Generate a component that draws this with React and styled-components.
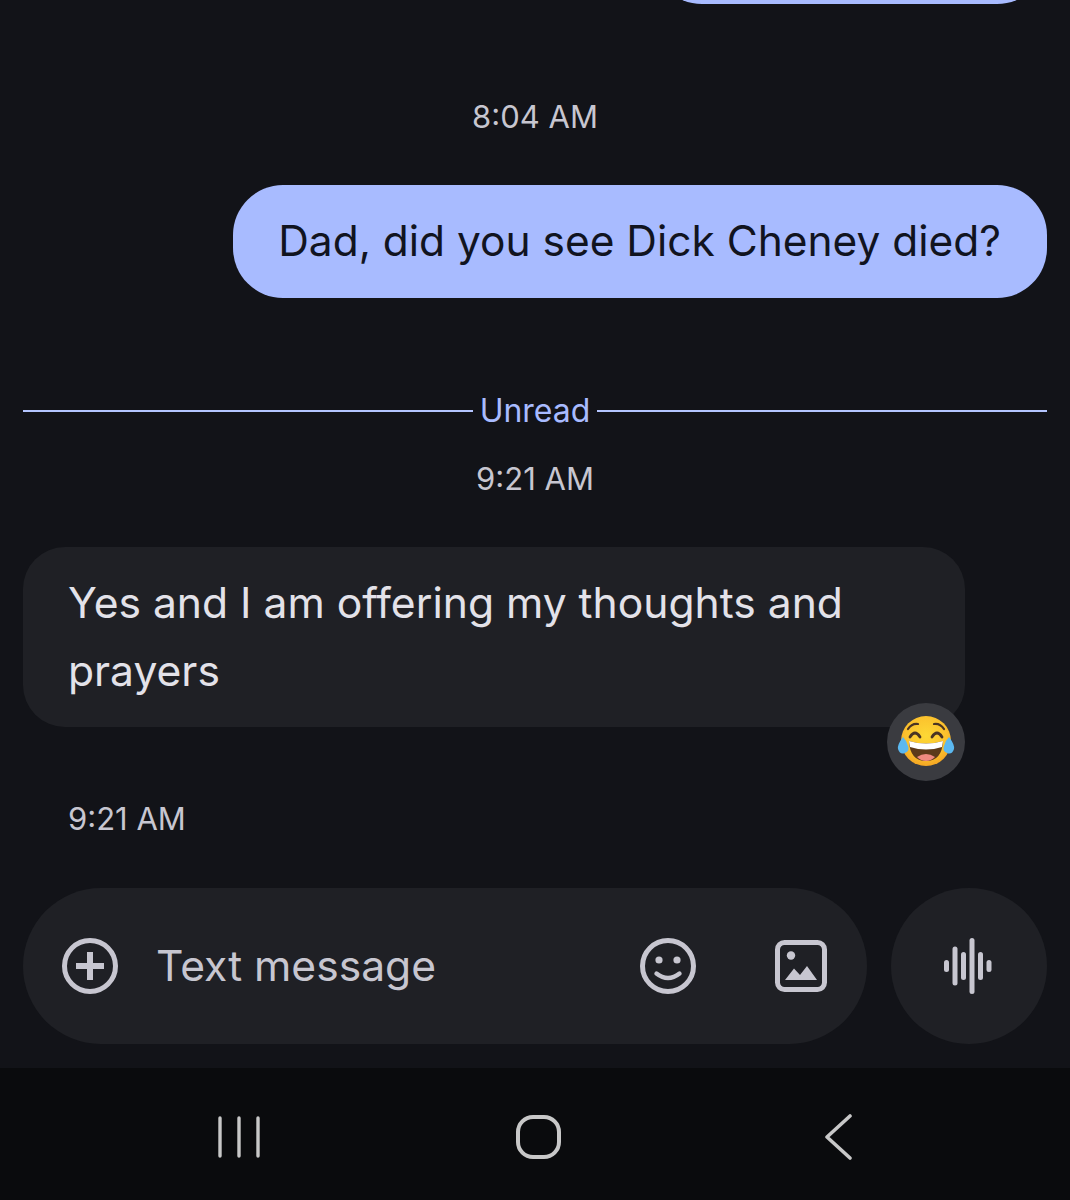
import React from "react";
import styled, { createGlobalStyle } from "styled-components";

const Global = createGlobalStyle`
  html, body { margin: 0; padding: 0; background: #121318; }
  * { box-sizing: border-box; }
`;

const Screen = styled.div`
  width: 1070px;
  height: 1200px;
  background: #121318;
  display: flex;
  flex-direction: column;
  font-family: Inter, Roboto, "Liberation Sans", sans-serif;
  overflow: hidden;
`;

const Thread = styled.div`
  flex: 1;
  display: flex;
  flex-direction: column;
  padding: 0 23px;
`;

const PrevBubbleEdge = styled.div`
  align-self: flex-end;
  width: 395px;
  height: 104px;
  margin-top: -100px;
  background: #a8bbff;
  border-radius: 50px;
`;

const Time = styled.div`
  font-size: 31px;
  line-height: 40px;
  color: #c7c6d0;
  text-align: ${(p) => (p.$left ? "left" : "center")};
  margin-top: ${(p) => p.$top}px;
  padding-left: ${(p) => (p.$left ? "45px" : "0")};
`;

const SentRow = styled.div`
  display: flex;
  justify-content: flex-end;
  margin-top: 48px;
`;

const SentBubble = styled.div`
  background: #a8bbff;
  color: #11141f;
  font-size: 42.45px;
  line-height: 111px;
  height: 113px;
  padding: 0 46px 0 45px;
  border-radius: 50px;
  white-space: nowrap;
`;

const Divider = styled.div`
  display: flex;
  align-items: center;
  gap: 7px;
  margin-top: 93px;
  height: 40px;
  color: #a8bbff;
  font-size: 32px;
  line-height: 40px;
`;

const DividerLine = styled.span`
  flex: 1;
  height: 2px;
  background: #b4c5ff;
`;

const ReceivedBubble = styled.div`
  position: relative;
  width: 942px;
  margin-top: 48px;
  padding: 22px 45px;
  background: #1f2025;
  color: #e3e2e9;
  font-size: 42.6px;
  line-height: 68px;
  border-radius: 42px;
`;

const Reaction = styled.div`
  position: absolute;
  right: 0;
  top: 156px;
  width: 78px;
  height: 78px;
  border-radius: 50%;
  background: #3a3b40;
  display: flex;
  align-items: center;
  justify-content: center;
`;

const ComposerRow = styled.div`
  display: flex;
  gap: 24px;
  margin-top: 49px;
`;

const Composer = styled.div`
  width: 844px;
  height: 156px;
  background: #1f2025;
  border-radius: 78px;
  display: flex;
  align-items: center;
  padding-left: 39px;
`;

const Placeholder = styled.div`
  flex: 1;
  margin-left: 38px;
  font-size: 42.6px;
  line-height: 56px;
  color: #c7c6d0;
`;

const IconSlot = styled.div`
  width: ${(p) => p.$w}px;
  height: 56px;
  margin-right: ${(p) => p.$mr || 0}px;
  display: flex;
  align-items: center;
  justify-content: center;
  flex: none;
`;

const VoiceButton = styled.div`
  width: 156px;
  height: 156px;
  border-radius: 50%;
  background: #1f2025;
  display: flex;
  align-items: center;
  justify-content: center;
`;

const NavBar = styled.div`
  height: 132px;
  background: #0a0b0d;
  display: flex;
  align-items: center;
  padding-left: 216px;
  padding-top: 6px;
`;

const NavIcon = styled.svg`
  display: block;
  flex: none;
  margin-right: ${(p) => p.$mr || 0}px;
`;

const LaughEmoji = () => (
  <svg width="60" height="56" viewBox="0 0 60 56" aria-hidden="true">
    <defs>
      <radialGradient id="face" cx="50%" cy="40%" r="60%">
        <stop offset="0" stopColor="#fdd835" />
        <stop offset="0.7" stopColor="#fbc02d" />
        <stop offset="1" stopColor="#f5a623" />
      </radialGradient>
    </defs>
    <circle cx="30" cy="27" r="25" fill="url(#face)" />
    <path d="M12 15 Q16 9 22 10" fill="none" stroke="#4a3424" strokeWidth="2.2" strokeLinecap="round" />
    <path d="M48 15 Q44 9 38 10" fill="none" stroke="#4a3424" strokeWidth="2.2" strokeLinecap="round" />
    <path d="M14 23 Q19 15 24 23" fill="none" stroke="#4a3424" strokeWidth="2.8" strokeLinecap="round" />
    <path d="M36 23 Q41 15 46 23" fill="none" stroke="#4a3424" strokeWidth="2.8" strokeLinecap="round" />
    <path d="M13 27 Q30 32 47 27 Q46 47 30 47 Q14 47 13 27 Z" fill="#5d3a1a" />
    <path d="M13 27 Q30 32 47 27 L46 33 Q30 38 14 33 Z" fill="#ffffff" />
    <path d="M21 43 Q30 37 39 43 Q35 47 30 47 Q25 47 21 43 Z" fill="#ef8a80" />
    <path d="M7 23 Q1 31 2 35 Q4 41 9 39 Q14 37 12 32 Q11 27 7 23 Z" fill="#5bb8f0" />
    <path d="M53 23 Q59 31 58 35 Q56 41 51 39 Q46 37 48 32 Q49 27 53 23 Z" fill="#5bb8f0" />
  </svg>
);

const PlusIcon = () => (
  <svg width="56" height="56" viewBox="0 0 56 56" fill="none" stroke="#c7c6d0" aria-hidden="true">
    <circle cx="28" cy="28" r="25.5" strokeWidth="5" />
    <path d="M14 28H42M28 14V42" strokeWidth="6" />
  </svg>
);

const SmileIcon = () => (
  <svg width="56" height="56" viewBox="0 0 56 56" fill="none" stroke="#c7c6d0" aria-hidden="true">
    <circle cx="28" cy="28" r="25.5" strokeWidth="5" />
    <circle cx="19" cy="22" r="3.6" fill="#c7c6d0" stroke="none" />
    <circle cx="37" cy="22" r="3.6" fill="#c7c6d0" stroke="none" />
    <path d="M16.5 35.5Q28 44.5 39.5 35.5" strokeWidth="4.4" strokeLinecap="round" />
  </svg>
);

const ImageIcon = () => (
  <svg width="52" height="52" viewBox="0 0 52 52" aria-hidden="true">
    <rect x="2.5" y="2.5" width="47" height="47" rx="7" fill="none" stroke="#c7c6d0" strokeWidth="5" />
    <circle cx="16" cy="15.5" r="4.2" fill="#c7c6d0" />
    <path d="M10 40L19 28.5L25 35L32 26L42 40Z" fill="#c7c6d0" />
  </svg>
);

const WaveIcon = () => (
  <svg width="50" height="56" viewBox="0 0 50 56" fill="none" stroke="#c7c6d0" strokeLinecap="round" strokeWidth="5" aria-hidden="true">
    <path d="M2.5 24.5V31.5" />
    <path d="M11 11V45" />
    <path d="M19.5 16.5V39.5" />
    <path d="M28 2.5V53.5" />
    <path d="M36.5 16.5V39.5" />
    <path d="M45 24.5V31.5" />
  </svg>
);

export default function App() {
  return (
    <Screen>
      <Global />
      <Thread>
        <PrevBubbleEdge />
        <Time $top={93}>8:04 AM</Time>
        <SentRow>
          <SentBubble>Dad, did you see Dick Cheney died?</SentBubble>
        </SentRow>
        <Divider>
          <DividerLine />
          Unread
          <DividerLine />
        </Divider>
        <Time $top={28}>9:21 AM</Time>
        <ReceivedBubble>
          Yes and I am offering my thoughts and prayers
          <Reaction>
            <LaughEmoji />
          </Reaction>
        </ReceivedBubble>
        <Time $left $top={72}>9:21 AM</Time>
        <ComposerRow>
          <Composer>
            <PlusIcon />
            <Placeholder>Text message</Placeholder>
            <IconSlot $w={56} $mr={79}><SmileIcon /></IconSlot>
            <IconSlot $w={52} $mr={40}><ImageIcon /></IconSlot>
          </Composer>
          <VoiceButton>
            <WaveIcon />
          </VoiceButton>
        </ComposerRow>
      </Thread>
      <NavBar>
        <NavIcon $mr={253} width="46" height="42" viewBox="0 0 46 42" fill="none" stroke="#c8c8c8" strokeWidth="3.4" strokeLinecap="round">
          <path d="M4 2V40M23 2V40M42 2V40" />
        </NavIcon>
        <NavIcon $mr={260} width="47" height="46" viewBox="0 0 47 46" fill="none" stroke="#c8c8c8" strokeWidth="4">
          <rect x="3" y="3" width="41" height="40" rx="15" />
        </NavIcon>
        <NavIcon width="32" height="46" viewBox="0 0 32 46" fill="none" stroke="#c8c8c8" strokeWidth="3.6" strokeLinecap="round" strokeLinejoin="round">
          <path d="M28 2L5 23L28 44" />
        </NavIcon>
      </NavBar>
    </Screen>
  );
}
